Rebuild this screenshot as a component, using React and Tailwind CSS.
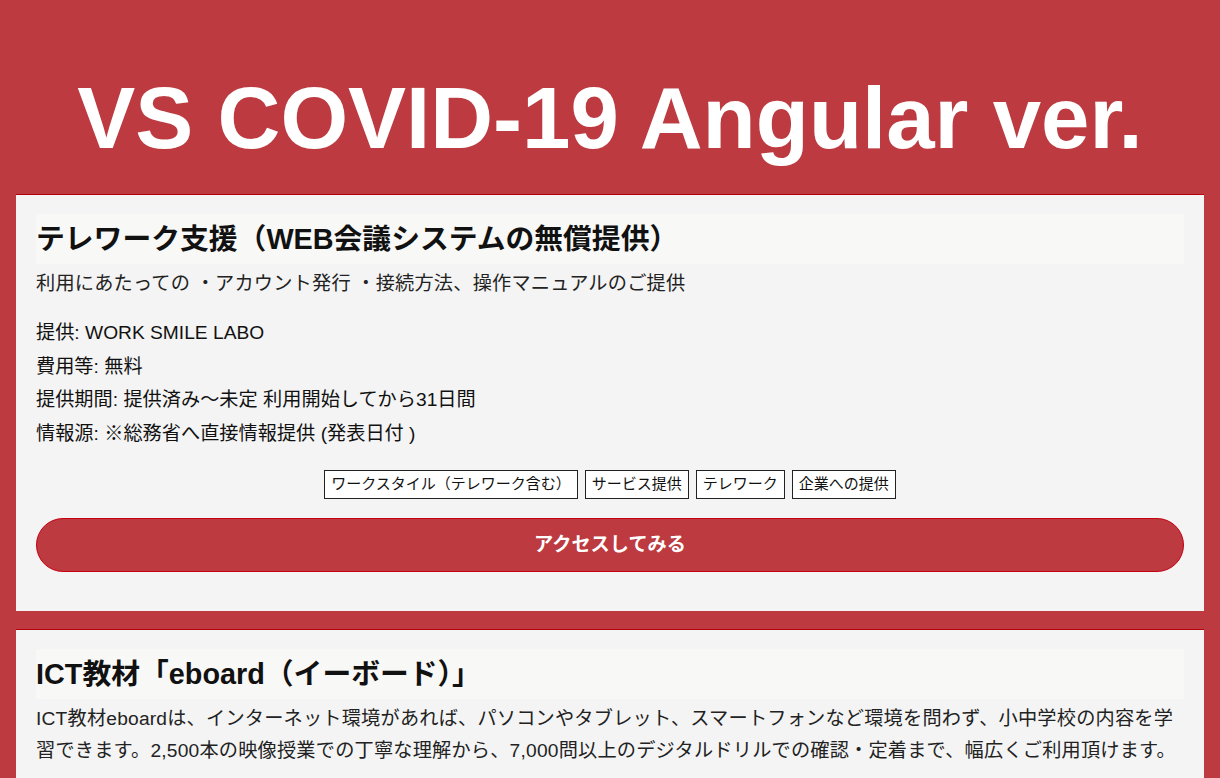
import React from 'react';

const items = [
  {
    title: 'テレワーク支援（WEB会議システムの無償提供）',
    description: '利用にあたっての ・アカウント発行 ・接続方法、操作マニュアルのご提供',
    provider: 'WORK SMILE LABO',
    cost: '無料',
    period: '提供済み〜未定 利用開始してから31日間',
    source: '※総務省へ直接情報提供 (発表日付 )',
    tags: ['ワークスタイル（テレワーク含む）', 'サービス提供', 'テレワーク', '企業への提供'],
  },
  {
    title: 'ICT教材「eboard（イーボード）」',
    description:
      'ICT教材eboardは、インターネット環境があれば、パソコンやタブレット、スマートフォンなど環境を問わず、小中学校の内容を学習できます。2,500本の映像授業での丁寧な理解から、7,000問以上のデジタルドリルでの確認・定着まで、幅広くご利用頂けます。',
    provider: 'NPO法人eboard',
    cost: '無料',
    period: '提供済み〜未定',
    source: '※総務省へ直接情報提供 (発表日付 )',
    tags: ['学習支援', 'サービス提供', '教育', '個人への提供'],
  },
];

function SupportCard({ item }) {
  return (
    <div className="mx-4 bg-[#f4f4f4] border-t border-[#b3000a] px-5 pt-[19px] pb-[39px]">
      <h2 className="h-[50px] flex items-center bg-[#f8f8f7] text-[28.8px] font-bold text-[#111] leading-none">
        {item.title}
      </h2>
      <p className="mt-1 text-[19.2px] leading-[32px] tracking-[0.2px] text-[#222]">{item.description}</p>
      <div className="mt-4 text-[19.2px] leading-[33.5px] text-[#111]">
        <p>提供: {item.provider}</p>
        <p>費用等: {item.cost}</p>
        <p>提供期間: {item.period}</p>
        <p>情報源: {item.source}</p>
      </div>
      <div className="mt-5 flex justify-center gap-[7px]">
        {item.tags.map((tag) => (
          <span
            key={tag}
            className="h-[29px] flex items-center px-[6px] bg-white border border-[#222] text-[15px] text-[#111]"
          >
            {tag}
          </span>
        ))}
      </div>
      <button className="mt-[19px] w-full h-[54px] rounded-[27px] bg-[#bc3a40] border border-[#c80010] text-white text-[19.2px] font-bold">
        アクセスしてみる
      </button>
    </div>
  );
}

export default function App() {
  return (
    <div
      className="min-h-screen bg-[#bc3a40] pb-5"
      style={{ fontFamily: '"Liberation Sans", "Noto Sans CJK JP", sans-serif' }}
    >
      <h1 className="pt-[74px] pb-[33px] text-center text-white text-[87px] font-bold leading-none">
        VS COVID-19 Angular ver.
      </h1>
      <div className="flex flex-col gap-[18px]">
        {items.map((item) => (
          <SupportCard key={item.title} item={item} />
        ))}
      </div>
    </div>
  );
}
